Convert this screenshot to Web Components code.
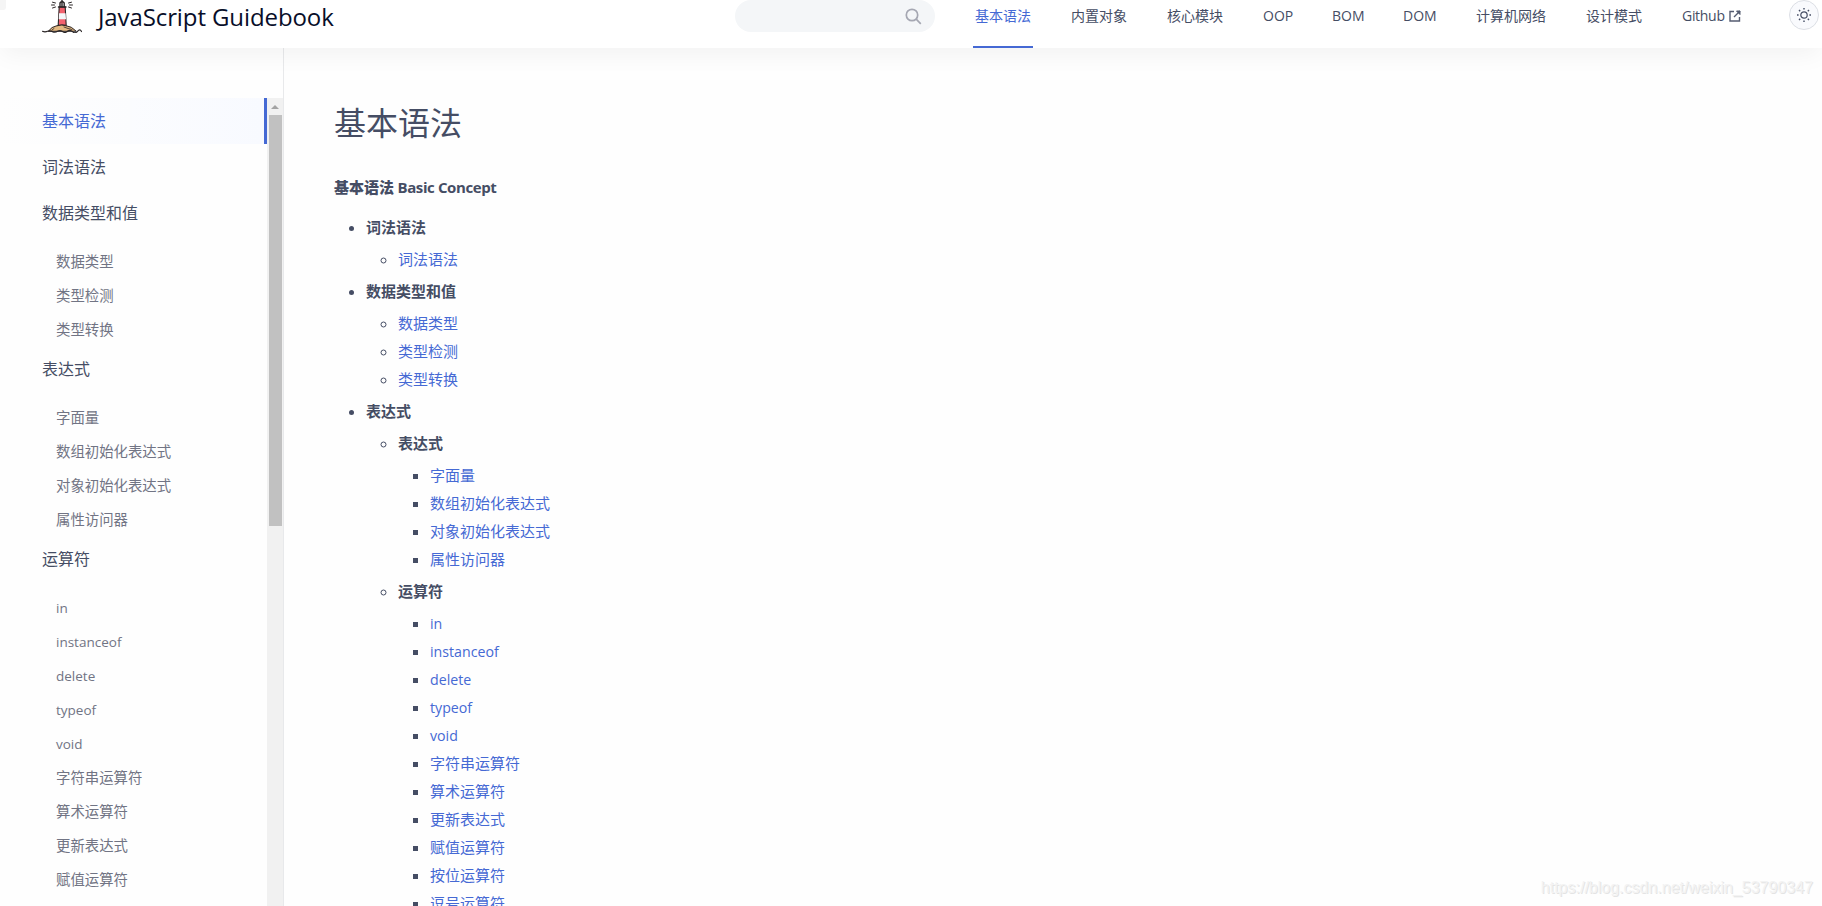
<!DOCTYPE html>
<html lang="zh-CN">
<head>
<meta charset="utf-8">
<title>JavaScript Guidebook</title>
<style>
    html, body {
        margin: 0;
        height: 100%;
        overflow: hidden;
        background: #fefefe;
        font-family: "Open Sans", "Noto Sans CJK SC", sans-serif;
        color: #454d64;
    }
    body {
        display: flex;
        flex-direction: column;
        position: relative;
    }
    main {
        display: flex;
        flex: 1;
        min-height: 0;
    }
</style>
</head>
<body>
<site-header title="JavaScript Guidebook">
    <nav-link active style="width:56px">基本语法</nav-link>
    <nav-link style="width:56px">内置对象</nav-link>
    <nav-link style="width:56px">核心模块</nav-link>
    <nav-link style="width:29px">OOP</nav-link>
    <nav-link style="width:31px">BOM</nav-link>
    <nav-link style="width:33px">DOM</nav-link>
    <nav-link style="width:70px">计算机网络</nav-link>
    <nav-link style="width:56px">设计模式</nav-link>
    <nav-link external style="width:58px">Github</nav-link>
</site-header>
<main>
    <side-menu></side-menu>
    <doc-content title="基本语法"></doc-content>
</main>
<water-mark>https://blog.csdn.net/weixin_53790347</water-mark>

<script>
const OPERATORS = ['in', 'instanceof', 'delete', 'typeof', 'void', '字符串运算符', '算术运算符', '更新表达式', '赋值运算符'];
const TYPES = ['数据类型', '类型检测', '类型转换'];
const EXPRESSIONS = ['字面量', '数组初始化表达式', '对象初始化表达式', '属性访问器'];

const MENU = [
    { title: '基本语法', active: true },
    { title: '词法语法' },
    { title: '数据类型和值', children: TYPES },
    { title: '表达式', children: EXPRESSIONS },
    { title: '运算符', children: OPERATORS }
];

const OUTLINE = [
    { title: '词法语法', children: ['词法语法'] },
    { title: '数据类型和值', children: TYPES },
    {
        title: '表达式',
        children: [
            { title: '表达式', children: EXPRESSIONS },
            { title: '运算符', children: [...OPERATORS, '按位运算符', '逗号运算符'] }
        ]
    }
];

/**
 * SiteHeader - Top bar with logo, search and navigation
 */
class SiteHeader extends HTMLElement {
    constructor() {
        super();
        this.attachShadow({ mode: 'open' });
    }

    connectedCallback() {
        this.shadowRoot.innerHTML = `
            <style>
                :host {
                    display: flex;
                    position: relative;
                    z-index: 2;
                    flex: none;
                    height: 48px;
                    padding: 0 3px 0 42px;
                    box-sizing: border-box;
                    background: #fff;
                    box-shadow: 0 8px 24px -2px rgba(0, 0, 0, 0.05);
                }
                .logo { width: 40px; height: 33px; flex: none; }
                .title {
                    width: 637px;
                    flex: none;
                    padding-left: 16px;
                    font-size: 24px;
                    line-height: 34px;
                    letter-spacing: -0.1px;
                    color: #080e29;
                    white-space: nowrap;
                }
                .search {
                    display: flex;
                    flex: none;
                    align-items: center;
                    justify-content: flex-end;
                    width: 200px;
                    height: 32px;
                    padding-right: 13px;
                    box-sizing: border-box;
                    border-radius: 16px;
                    background: #f4f6f8;
                }
                nav { display: flex; gap: 40px; padding-left: 40px; }
                .theme {
                    display: flex;
                    flex: none;
                    width: 30px;
                    height: 30px;
                    margin-left: auto;
                    box-sizing: border-box;
                    border: 1px solid #dcdfe5;
                    border-radius: 50%;
                    background: #f9fafd;
                    align-items: center;
                    justify-content: center;
                }
                .corner {
                    position: absolute;
                    left: 0;
                    top: 0;
                    width: 6px;
                    height: 10px;
                    border-radius: 0 0 3px 0;
                    background: #f5f5f5;
                }
            </style>
            <div class="corner"></div>
            <svg class="logo" viewBox="0 0 40 33" fill="none" stroke="#2b2627" stroke-linecap="round">
                <path d="M6.500 31Q10 26.500 14 26Q19 23.500 25 26Q29 26 34 31Z" fill="#e3b982" stroke-width="1"/>
                <path d="M17.200 7h6l1 18.500q-4-1.500-8 0z" fill="#f2626e" stroke-width="1.100"/>
                <path d="M17 13.200h6.600l.4 6h-7.300z" fill="#f5f5f7" stroke="none"/>
                <path d="M18 7V3q2-3 4.200 0v4M20-1v7M16.500 7h7.500" stroke-width="1.400"/>
                <path d="M10.500 2.200l3 .8M10.500 8l3-1M9.500 5h3M29.500 2.200l-3 .8M29.500 8l-3-1M30.500 5h-3" stroke-width="1"/>
                <path d="M22 27l4 1.500 4 1M12 28.500l-2 1.500" stroke-width=".8"/>
                <path d="M.5 31.300q2.500 1 5 0t5 .3 5-.3 5 .3 5-.3 5 .3 5-.3 4 .2" stroke-width="1.200"/>
            </svg>
            <div class="title">${this.getAttribute('title')}</div>
            <div class="search">
                <svg width="17" height="17" viewBox="0 0 17 17" fill="none" stroke="#a5a7b2" stroke-width="1.700">
                    <circle cx="7" cy="7" r="5.700"/>
                    <path d="M11.200 11.200L15.800 15.800"/>
                </svg>
            </div>
            <nav><slot></slot></nav>
            <div class="theme">
                <svg width="14" height="14" viewBox="0 0 14 14" fill="none" stroke="#454d64" stroke-width="1.200">
                    <circle cx="7" cy="7" r="3.200"/>
                    <path d="M7 0v1.600M7 12.400V14M0 7h1.600M12.400 7H14M2 2l1.200 1.200M10.800 10.800L12 12M12 2l-1.200 1.200M3.200 10.800L2 12" stroke-width="1.400"/>
                </svg>
            </div>
        `;
    }
}

/**
 * NavLink - One entry of the top navigation
 */
class NavLink extends HTMLElement {
    constructor() {
        super();
        this.attachShadow({ mode: 'open' });
    }

    connectedCallback() {
        const external = this.hasAttribute('external');

        this.shadowRoot.innerHTML = `
            <style>
                :host {
                    display: flex;
                    flex: none;
                    height: 48px;
                    box-sizing: content-box;
                    padding: 0 2px;
                    margin: 0 -2px;
                    font-size: 14px;
                    line-height: 31px;
                    white-space: nowrap;
                }
                :host([active]) {
                    height: 46px;
                    border-bottom: 2px solid #4569d4;
                    color: #4569d4;
                }
                :host([external]) { letter-spacing: -0.3px; }
                svg { margin: 10px 0 0 4px; flex: none; }
            </style>
            <span><slot></slot></span>
            ${external ? `
                <svg width="12" height="12" viewBox="0 0 12 12" fill="none" stroke="#555c71" stroke-width="1.400">
                    <path d="M5 1.500H1v9.500h9.500V7M11 1L5 7"/>
                    <path d="M7.500 1H11v3.500z" fill="#555c71" stroke-width="1"/>
                </svg>
            ` : ''}
        `;
    }
}

/**
 * SideMenu - Left hand chapter list with its scrollbar
 */
class SideMenu extends HTMLElement {
    constructor() {
        super();
        this.attachShadow({ mode: 'open' });
    }

    connectedCallback() {
        this.shadowRoot.innerHTML = `
            <style>
                :host {
                    display: flex;
                    flex: none;
                    width: 284px;
                    padding-top: 50px;
                    box-sizing: border-box;
                    border-right: 1px solid #e8e9eb;
                    overflow: hidden;
                }
                .list { width: 267px; }
                .item {
                    height: 46px;
                    padding-left: 42px;
                    box-sizing: border-box;
                    font-size: 16px;
                    line-height: 46px;
                }
                .item.active {
                    color: #4569d4;
                    border-right: 3px solid #4569d4;
                    background: linear-gradient(to left, #f8faff, rgba(248, 250, 255, 0));
                }
                .sub { padding: 9px 0 0 56px; margin-bottom: -1px; }
                .sub div {
                    height: 34px;
                    font-size: 14.400px;
                    line-height: 34px;
                    color: #717484;
                }
                .sub .latin { font-size: 13.500px; }
                .bar {
                    display: flex;
                    flex-direction: column;
                    align-items: center;
                    width: 16px;
                    background: #f1f1f1;
                }
                .arrow {
                    margin: 7px 0 6px;
                    border: solid transparent;
                    border-width: 0 4px 4px;
                    border-bottom-color: #a3a3a3;
                }
                .thumb { width: 13px; height: 411px; margin-left: 1px; background: #c1c1c1; }
            </style>
            <div class="list">
                ${MENU.map((item) => `
                    <div class="item ${item.active ? 'active' : ''}">${item.title}</div>
                    ${item.children ? `
                        <div class="sub">
                            ${item.children.map((name) => `<div class="${/^[a-z]/.test(name) ? 'latin' : ''}">${name}</div>`).join('')}
                        </div>
                    ` : ''}
                `).join('')}
            </div>
            <div class="bar">
                <div class="arrow"></div>
                <div class="thumb"></div>
            </div>
        `;
    }
}

/**
 * DocContent - Article area with the chapter outline
 */
class DocContent extends HTMLElement {
    constructor() {
        super();
        this.attachShadow({ mode: 'open' });
    }

    connectedCallback() {
        this.shadowRoot.innerHTML = `
            <style>
                :host {
                    display: block;
                    flex: 1;
                    padding: 50px 0 0 50px;
                    font-size: 15px;
                    line-height: 28px;
                    overflow: hidden;
                }
                h1 {
                    margin: 0;
                    font-size: 32px;
                    font-weight: 400;
                    line-height: 50px;
                }
                p { margin: 25px 0 12px; font-weight: 700; letter-spacing: -0.4px; }
                p b { letter-spacing: 0; }
                ul { margin: 0; padding-left: 32px; }
                ul ul { margin: 4px 0; }
                a { color: #4569d4; text-decoration: none; }
                .latin { font-size: 14.200px; line-height: 1; }
            </style>
            <h1>${this.getAttribute('title')}</h1>
            <p><b>基本语法</b> Basic Concept</p>
            ${this._list(OUTLINE)}
        `;
    }

    /**
     * Build a nested list, strings become links
     */
    _list(items) {
        return `<ul>${items.map((item) => typeof item === 'string'
            ? `<li><a class="${/^[a-z]/.test(item) ? 'latin' : ''}">${item}</a></li>`
            : `<li><strong>${item.title}</strong>${this._list(item.children)}</li>`).join('')}</ul>`;
    }
}

/**
 * WaterMark - Faint source address in the lower corner
 */
class WaterMark extends HTMLElement {
    constructor() {
        super();
        this.attachShadow({ mode: 'open' });
        this.shadowRoot.innerHTML = `
            <style>
                :host {
                    position: absolute;
                    right: 9px;
                    bottom: 8px;
                    z-index: 3;
                    font: 16px/20px "Liberation Sans", sans-serif;
                    color: #f3f3f3;
                    text-shadow: 1px 1px 0 #e4e4e4;
                }
            </style>
            <slot></slot>
        `;
    }
}

customElements.define('site-header', SiteHeader);
customElements.define('nav-link', NavLink);
customElements.define('side-menu', SideMenu);
customElements.define('doc-content', DocContent);
customElements.define('water-mark', WaterMark);
</script>
</body>
</html>
